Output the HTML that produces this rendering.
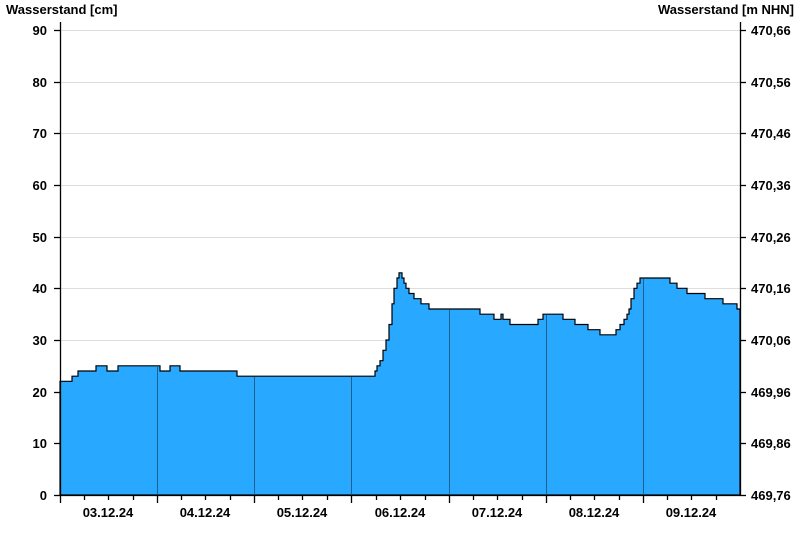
<!DOCTYPE html><html><head><style>body{margin:0;background:#fff}svg{display:block;font-family:"Liberation Sans",Arial,sans-serif;font-weight:bold;font-size:13px}</style></head><body>
<svg width="800" height="550" xmlns="http://www.w3.org/2000/svg">
<rect width="800" height="550" fill="#fff"/>
<g stroke="#dedede" stroke-width="1">
<line x1="60" x2="740" y1="30.5" y2="30.5"/><line x1="60" x2="740" y1="82.5" y2="82.5"/><line x1="60" x2="740" y1="133.5" y2="133.5"/><line x1="60" x2="740" y1="185.5" y2="185.5"/><line x1="60" x2="740" y1="237.5" y2="237.5"/><line x1="60" x2="740" y1="288.5" y2="288.5"/><line x1="60" x2="740" y1="340.5" y2="340.5"/><line x1="60" x2="740" y1="392.5" y2="392.5"/><line x1="60" x2="740" y1="443.5" y2="443.5"/>
</g>
<path fill="#29a8ff" stroke="#000" stroke-width="1.2" d="M60,495 V381.3 H72 V376.2 H78 V371 H96 V365.8 H107 V371 H118 V365.8 H160 V371 H170 V365.8 H180 V371 H237 V376.2 H375 V371 H377 V365.8 H380 V360.7 H383 V350.3 H386 V340 H389 V324.5 H392 V303.8 H394 V288.3 H397 V278 H399 V272.8 H402 V278 H404 V283.2 H406 V288.3 H409 V293.5 H414 V298.7 H421 V303.8 H429 V309 H480 V314.2 H494 V319.3 H501 V314.2 H503 V319.3 H510 V324.5 H538 V319.3 H543 V314.2 H563 V319.3 H575 V324.5 H588 V329.7 H600 V334.8 H616 V329.7 H620 V324.5 H624 V319.3 H627 V314.2 H629 V309 H631 V298.7 H634 V288.3 H637 V283.2 H640 V278 H670 V283.2 H677 V288.3 H687 V293.5 H705 V298.7 H723 V303.8 H737 V309 H740 V495 Z"/>
<g stroke="#1e5f8c" stroke-width="1">
<line x1="157.5" x2="157.5" y1="367" y2="495"/><line x1="254.5" x2="254.5" y1="377" y2="495"/><line x1="351.5" x2="351.5" y1="377" y2="495"/><line x1="449.5" x2="449.5" y1="310" y2="495"/><line x1="546.5" x2="546.5" y1="315" y2="495"/><line x1="643.5" x2="643.5" y1="279" y2="495"/>
</g>
<g stroke="#000" stroke-width="1.3">
<line x1="60.5" x2="60.5" y1="22" y2="503"/><line x1="740.5" x2="740.5" y1="22" y2="495"/><line x1="60" x2="740" y1="495.5" y2="495.5"/>
<line x1="54" x2="60" y1="30.5" y2="30.5"/><line x1="54" x2="60" y1="82.5" y2="82.5"/><line x1="54" x2="60" y1="133.5" y2="133.5"/><line x1="54" x2="60" y1="185.5" y2="185.5"/><line x1="54" x2="60" y1="237.5" y2="237.5"/><line x1="54" x2="60" y1="288.5" y2="288.5"/><line x1="54" x2="60" y1="340.5" y2="340.5"/><line x1="54" x2="60" y1="392.5" y2="392.5"/><line x1="54" x2="60" y1="443.5" y2="443.5"/><line x1="54" x2="60" y1="495.5" y2="495.5"/>
<line x1="740" x2="746" y1="30.5" y2="30.5"/><line x1="740" x2="746" y1="82.5" y2="82.5"/><line x1="740" x2="746" y1="133.5" y2="133.5"/><line x1="740" x2="746" y1="185.5" y2="185.5"/><line x1="740" x2="746" y1="237.5" y2="237.5"/><line x1="740" x2="746" y1="288.5" y2="288.5"/><line x1="740" x2="746" y1="340.5" y2="340.5"/><line x1="740" x2="746" y1="392.5" y2="392.5"/><line x1="740" x2="746" y1="443.5" y2="443.5"/><line x1="740" x2="746" y1="495.5" y2="495.5"/>
<line x1="157.5" x2="157.5" y1="495" y2="503"/><line x1="254.5" x2="254.5" y1="495" y2="503"/><line x1="351.5" x2="351.5" y1="495" y2="503"/><line x1="449.5" x2="449.5" y1="495" y2="503"/><line x1="546.5" x2="546.5" y1="495" y2="503"/><line x1="643.5" x2="643.5" y1="495" y2="503"/>
<line x1="84.5" x2="84.5" y1="495" y2="500"/><line x1="108.5" x2="108.5" y1="495" y2="500"/><line x1="133.5" x2="133.5" y1="495" y2="500"/>
<line x1="181.5" x2="181.5" y1="495" y2="500"/><line x1="205.5" x2="205.5" y1="495" y2="500"/><line x1="230.5" x2="230.5" y1="495" y2="500"/>
<line x1="278.5" x2="278.5" y1="495" y2="500"/><line x1="302.5" x2="302.5" y1="495" y2="500"/><line x1="327.5" x2="327.5" y1="495" y2="500"/>
<line x1="376.5" x2="376.5" y1="495" y2="500"/><line x1="400.5" x2="400.5" y1="495" y2="500"/><line x1="425.5" x2="425.5" y1="495" y2="500"/>
<line x1="473.5" x2="473.5" y1="495" y2="500"/><line x1="497.5" x2="497.5" y1="495" y2="500"/><line x1="522.5" x2="522.5" y1="495" y2="500"/>
<line x1="570.5" x2="570.5" y1="495" y2="500"/><line x1="594.5" x2="594.5" y1="495" y2="500"/><line x1="619.5" x2="619.5" y1="495" y2="500"/>
<line x1="667.5" x2="667.5" y1="495" y2="500"/><line x1="691.5" x2="691.5" y1="495" y2="500"/><line x1="716.5" x2="716.5" y1="495" y2="500"/>
</g>
<g fill="#000">
<text x="6" y="14">Wasserstand [cm]</text>
<text x="794" y="14" text-anchor="end">Wasserstand [m NHN]</text>
<g text-anchor="end">
<text x="47" y="35">90</text><text x="47" y="87">80</text><text x="47" y="138">70</text><text x="47" y="190">60</text><text x="47" y="242">50</text><text x="47" y="293">40</text><text x="47" y="345">30</text><text x="47" y="397">20</text><text x="47" y="448">10</text><text x="47" y="500">0</text>
</g>
<text x="751" y="35">470,66</text><text x="751" y="87">470,56</text><text x="751" y="138">470,46</text><text x="751" y="190">470,36</text><text x="751" y="242">470,26</text><text x="751" y="293">470,16</text><text x="751" y="345">470,06</text><text x="751" y="397">469,96</text><text x="751" y="448">469,86</text><text x="751" y="500">469,76</text>
<g text-anchor="middle">
<text x="108" y="517">03.12.24</text><text x="205" y="517">04.12.24</text><text x="302" y="517">05.12.24</text><text x="400" y="517">06.12.24</text><text x="497" y="517">07.12.24</text><text x="594" y="517">08.12.24</text><text x="691" y="517">09.12.24</text>
</g>
</g>
</svg></body></html>
